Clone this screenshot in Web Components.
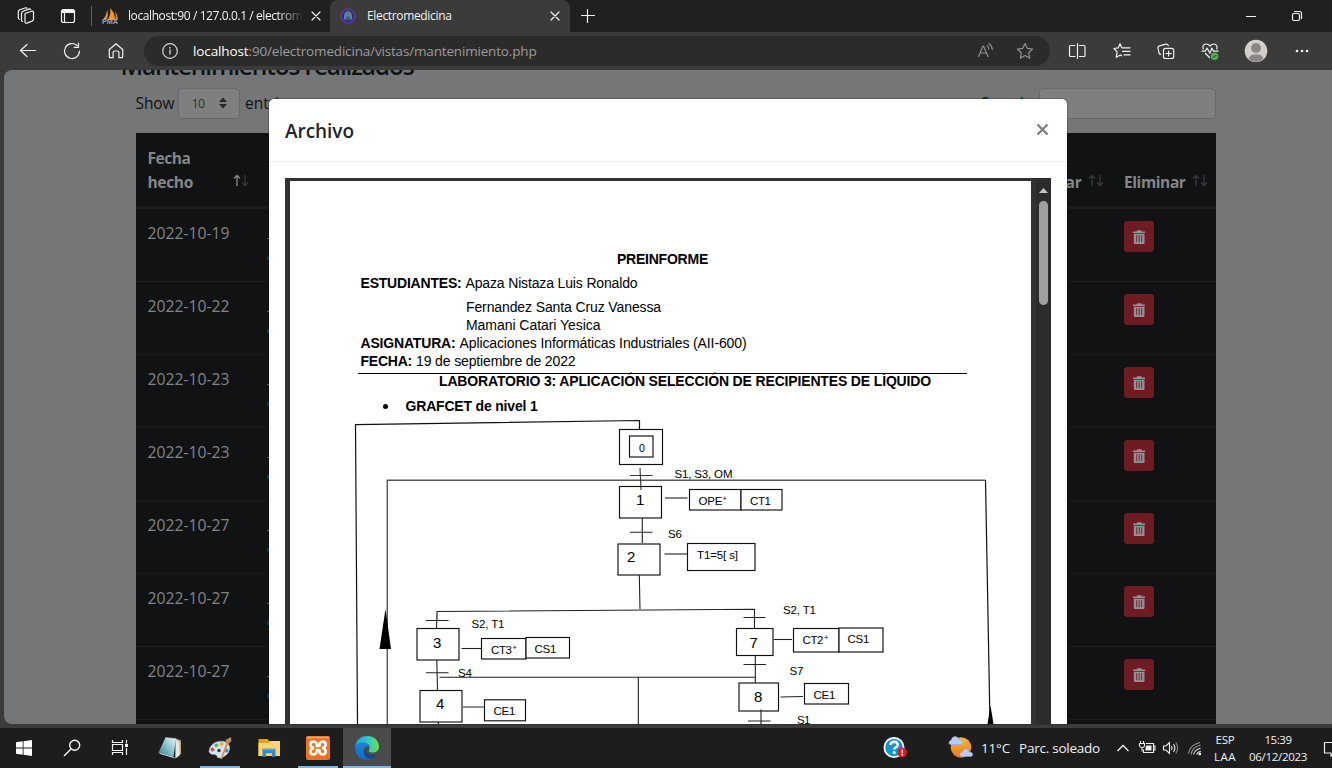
<!DOCTYPE html>
<html lang="es">
<head>
<meta charset="utf-8">
<title>Electromedicina</title>
<style>
html,body{margin:0;height:100%;overflow:hidden;background:#202020;font-family:"Open Sans","Noto Sans",sans-serif}
</style>
</head>
<body>
<browser-window></browser-window>
<script>
const define = (name, html, setup) => {
  const t = document.createElement('template');
  t.innerHTML = html;
  customElements.define(name, class extends HTMLElement {
    connectedCallback() {
      if (this.shadowRoot) return;
      this.attachShadow({mode: 'open'}).append(t.content.cloneNode(true));
      if (setup) setup(this, this.shadowRoot);
    }
  });
};

/* Text run spaced to a given width */
define('fit-text', `<style>:host{display:inline-block;white-space:pre;flex:none}span{display:inline-block}</style><span><slot></slot></span>`, (el, root) => {
  const w = +el.getAttribute('w'), s = root.querySelector('span');
  const n = el.textContent.length;
  if (!n) return;
  el.style.letterSpacing = (w - s.getBoundingClientRect().width) / n + 'px';
  el.style.width = w + 'px';
});

/* Icons on a 32 x 32 grid, centred on 16,16 */
const L = 'fill="none" stroke="currentColor" stroke-width="1.2" stroke-linecap="round" stroke-linejoin="round"';
const icons = {
  workspaces: `<g ${L}><path d="M15 13.500l6.500-2.300q2-.5 2 1.400v6.400q0 1.500-1.400 2.100l-5.200 2q-1.900.6-1.900-1.300z"/><path d="M12.600 21.500q-1.100-.3-1.100-1.600v-6.400q0-1.700 1.500-2.300l6.500-2.300 1.200.4M9.300 19.300q-1-.4-1-1.600v-5.600q0-1.700 1.500-2.300l6-2.100 1.300.4"/></g>`,
  tabs: `<g ${L}><rect x="9.500" y="9.500" width="13" height="13" rx="2"/><path d="M12.500 13v9"/></g><path d="M9.500 13v-2q0-1.500 1.500-1.500h10q1.500 0 1.500 1.500v2z" fill="currentColor"/>`,
  pma: `<path d="M13 10q2 5-1 10H8.500q4-4 4.500-10M16 8q5 5 5 12h-7.500q4-6 2.500-12" fill="#f29a27"/><path d="M21 11q3 4 3 9h-2.500q.5-5-.5-9z" fill="#d8862a"/><text x="8" y="23.800" font-size="6.500" font-weight="700" font-family="Liberation Sans" fill="#9a9dcc" textLength="16" lengthAdjust="spacingAndGlyphs">PMA</text>`,
  seal: `<circle cx="16" cy="16" r="6.500" fill="#2b3448" stroke="#43359f" stroke-width="2.200"/><circle cx="16" cy="16" r="7.900" fill="none" stroke="#a02b4f" stroke-width=".9" stroke-dasharray="1.500 1"/><path d="M12 19.500q-1-7.500 4-8.500 5 1 4 8.500z" fill="#4e88a7"/><path d="M15 13h2v3h-2z" fill="#b9545d"/><path d="M14 16.500h4v3h-4z" fill="#365f8a"/>`,
  close: `<path ${L} d="M12 12l8 8m0-8l-8 8"/>`,
  plus: `<path ${L} d="M9.500 15.500h13M15.500 9.500v13"/>`,
  minimize: `<path d="M11 16h10v1H11z" fill="currentColor"/>`,
  restore: `<g ${L}><rect x="11.500" y="13.500" width="7" height="7" rx="1.500"/><path d="M13.500 11.500h5q2 0 2 2v5"/></g>`,
  back: `<path ${L} d="M23.500 15.500H8.500M15 9.500L8.500 15.500l6.500 6"/>`,
  reload: `<path ${L} stroke-width="1.300" d="M23.500 16a7.500 7.500 0 1 1-2.400-5.500M22.500 8v4.300h-4.300"/>`,
  home: `<path ${L} d="M9.300 14.500L16 8.700l6.700 5.800v7.300q0 .9-.9.9h-2.900v-5.200q0-1.500-1.500-1.500h-2.800q-1.500 0-1.500 1.500v5.200h-2.900q-.9 0-.9-.9z"/>`,
  info: `<circle cx="16" cy="16" r="7.300" ${L}/><path d="M15.300 14.500h1.400v5h-1.400zM15.300 12h1.400v1.400h-1.400z" fill="currentColor"/>`,
  read: `<g ${L}><path d="M9.500 21.500L14 11h.5L19 21.500M11 18h6.500M18 10.500q1.700 1.300 1.700 3.500M20 8.500q3 2 3.300 6"/></g>`,
  star: `<path ${L} d="M16 8.500l2.300 4.900 5.300.7-3.900 3.700 1 5.300L16 20.500l-4.700 2.600 1-5.300-3.900-3.700 5.300-.7z"/>`,
  split: `<path ${L} d="M14 10.500h-4.500q-1 0-1 1v9q0 1 1 1H14M18.500 10.500h4.500q1 0 1 1v9q0 1-1 1h-4.500M16.500 8.500v15"/>`,
  favorites: `<path ${L} d="M18.500 12.800h-1.700L15 8.700l-1.900 4.200-4.200.6 3.200 3.300-.9 5.500 4.200-2.400 1.200.9M18.500 12.800h6.500M17.500 16.300H25M19 19.800h6"/>`,
  collections: `<g ${L} stroke-width="1.300"><rect x="13.500" y="13.300" width="10.200" height="10.200" rx="2"/><path d="M18.600 16v5M16 18.500h5.200M10.800 19.500q-1.500-.3-1.900-2l-.9-4.300q-.3-2 1.500-2.400l6.300-1.700q2-.4 2.500 1.500"/></g>`,
  health: `<g ${L} stroke-width="1.300"><path d="M9.200 14q-1.200-4.500 3-5 2.200-.1 3.800 2.200Q17.600 8.900 19.800 9q4.200.5 3 5M8 16.200h3.200l2-3 2.700 5 2-5.200 1.600 3.200h4.500M11.500 18.500l4 4"/></g><circle cx="20.500" cy="21.300" r="3.800" fill="#4caf50"/><path d="M18.900 21.500l1 1 2.300-2.400" fill="none" stroke="#203d20"/>`,
  avatar: `<circle cx="16" cy="16" r="11.300" fill="#d3d0cc"/><circle cx="16" cy="13" r="5" fill="#8c8784"/><path d="M8.500 23.500q1.500-4.300 7.500-4.300t7.500 4.300q-3 3.500-7.500 3.500t-7.500-3.500z" fill="#8c8784"/>`,
  dots: `<g fill="currentColor"><circle cx="11" cy="16" r="1.300"/><circle cx="16" cy="16" r="1.300"/><circle cx="21" cy="16" r="1.300"/></g>`,
  windows: `<path d="M8 10.300l6.700-1v6.200H8zM15.500 9.200L24 8v7.500h-8.500zM8 16.400h6.700v6.300L8 21.700zM15.500 16.400H24V24l-8.500-1.200z" fill="#fff"/>`,
  search: `<g fill="none" stroke="#f4f4f4" stroke-width="1.400"><circle cx="18.700" cy="13.300" r="5"/><path d="M15 17l-7 7"/></g>`,
  taskview: `<g fill="none" stroke="#f4f4f4" stroke-width="1.200"><path d="M8.500 8v2.500h10V8M8.500 23v-2.500h10V23M8.500 12.500h10v6h-10zM22.500 8v3.500M22.500 16V23"/></g><path d="M21 12h3v3h-3z" fill="#fff"/>`,
  notepad: `<linearGradient id="n" x1="1" y1="0" x2="0" y2="1"><stop stop-color="#e9fafa"/><stop offset=".5" stop-color="#86bfca"/><stop offset="1" stop-color="#2a8093"/></linearGradient><path d="M21 6.500l5 2v13l-4 4.500z" fill="#c3a673"/><path d="M20.500 7l3.800 3 .5 13-4.500 3.500z" fill="#dfe8ee"/><path d="M10.500 5.500L21 6.500l-2.500 18.500-15-4.500z" fill="url(#n)"/><path d="M3.500 20.500l15 4.500 1.800 1.500-15-4.500z" fill="#dce8ea"/><path d="M10.500 5.500l10.500 1" stroke="#9eabae" stroke-dasharray="1 1"/>`,
  paint: `<path d="M5 19.500C5.500 12 13 8 20 9.500q6.500 2 5.500 8-1 5-5.500 7-3 2.500-6.500 1-.5-3-3-3-4.500.5-5.500-3z" fill="#d5e6f3" stroke="#91b5d1" stroke-width=".6"/><circle cx="8.500" cy="17.500" r="1.900" fill="#e14a45"/><circle cx="12.300" cy="13.300" r="1.900" fill="#59b651"/><circle cx="17.500" cy="12" r="2" fill="#efaf32"/><circle cx="22.500" cy="18.500" r="2" fill="#4792dc"/><circle cx="15" cy="18.500" r="1.700" fill="#253445"/><path d="M22 11.500l2 1L18 27l-1.500.5.500-2z" fill="#e39335"/><path d="M22 11.500l-.5-3.500 5.500-3 .5 4-3.500 3.500z" fill="#b98c5f"/>`,
  explorer: `<path d="M5.500 7h9l1.500 2H27v15H5.500z" fill="#e2a322"/><path d="M5.500 11h10l2-2H27v15H5.500z" fill="#fbd667"/><path d="M9.500 17h13v7.800h-3.600v-3.500h-5.800v3.500H9.500z" fill="#3b89cf"/><path d="M9.500 16.500h13v1.500h-13z" fill="#5ba6e4"/>`,
  xampp: `<rect x="4" y="4" width="24" height="24" rx="2" fill="#ef7122"/><path d="M5 5.500h22" stroke="#f7a772" stroke-width="1.500"/><path d="M14.500 13.800q.6-4.100-3-4.100-3.200 0-3.200 2.900 0 1.900 2.700 3.400-2.700 1.500-2.700 3.400 0 2.900 3.200 2.900 3.600 0 3-4.100h3q-.6 4.100 3 4.100 3.200 0 3.200-2.900 0-1.900-2.700-3.400 2.700-1.500 2.700-3.400 0-2.900-3.200-2.900-3.600 0-3 4.100z" fill="none" stroke="#fff" stroke-width="2.700" stroke-linejoin="round"/>`,
  edge: `<linearGradient id="a" x1="0" x2="1"><stop stop-color="#219cdb"/><stop offset=".5" stop-color="#31c6d2"/><stop offset="1" stop-color="#63e345"/></linearGradient><linearGradient id="b" x1="0" y1="0" x2="0" y2="1"><stop stop-color="#1986d8"/><stop offset="1" stop-color="#0b6dc8"/></linearGradient><path d="M4 15.500C4.500 8.500 9.500 4 16 4c7 0 12 4.700 12 10.500 0 4-3 6-6.500 6-3.200 0-4.500-1.300-3.200-3 1.500-4.500-2-6.500-5.500-6.500-4 0-7.800 2-8.800 4.500z" fill="url(#a)"/><path d="M4 15.500C5 12 8.500 10.500 12 10.500c3.500 0 6 2 6.500 5-2-2-6-1-6 3.500 0 4.500 3 7.500 7 8.300C12 30 4 24 4 15.500z" fill="url(#b)"/><path d="M13.500 17c-2 4 .5 9.500 6 10.300 3-1 5-2.700 6.500-5-5.500 2-11.500.5-12.500-5.300z" fill="#114a8b"/>`,
  help: `<circle cx="15" cy="15.500" r="9.600" fill="#1393ce" stroke="#fff" stroke-width="1.800"/><path d="M11.500 13q.2-3.300 3.700-3.300 3.600.2 3.500 3 0 1.700-2 2.700-1.400.7-1.400 2.200" fill="none" stroke="#fff" stroke-width="2.400"/><circle cx="15.200" cy="20.600" r="1.500" fill="#fff"/><circle cx="23.200" cy="20.500" r="4.800" fill="#e51622"/><path d="M22.500 17.500h1.500v3.700h-1.500zM22.500 22h1.500v1.500h-1.500z" fill="#fff"/>`,
  weather: `<linearGradient id="s" x1="0" y1="0" x2="0" y2="1"><stop stop-color="#fbb739"/><stop offset="1" stop-color="#ec7621"/></linearGradient><circle cx="17" cy="15.500" r="10.300" fill="url(#s)"/><path d="M6 12.500q-1-.3-1-2 .2-2 2.200-2.200.8-3.800 4-3.700 3 .2 3.500 3.200 4-.2 4.300 2.700 0 1.900-2 2zM17.500 24.500q-1.800-.4-1.700-2 .2-2.200 2.600-2.300 1-3.200 3.700-3.100 2.700.2 3.200 2.900 3.500.1 3.400 2.700-.2 1.800-2 1.800z" fill="#b9cdf3" stroke="#8ea8dd" stroke-width=".5"/>`,
  up: `<path d="M10.500 19l5.500-5.500 5.500 5.500" fill="none" stroke="#eee" stroke-width="1.300"/>`,
  battery: `<g fill="none" stroke="#eee" stroke-width="1.100"><path d="M15 11.500h7.500v9H12.500v-3M22.500 14h1.500v4h-1.500M9.500 9v2M12.500 9v2M8.500 11.500h5v2.300q-.5 1.700-2.500 1.700t-2.500-1.700zM11 15.500v4"/></g><path d="M15.500 13.500h5v5H14.500v-3z" fill="#eee"/>`,
  sound: `<g fill="none" stroke="#eee" stroke-width="1.100"><path d="M8.500 14h2.500l3.500-3.500v11L11 18H8.500zM16.500 14q1.300 2 0 4M18.500 12q2.800 4 0 8"/><path d="M20.700 10.200q3.800 5.800 0 11.600" stroke="#888"/></g>`,
  wifi: `<g fill="none" stroke="#ddd" stroke-width="1.100"><path d="M12.500 22.500q1-4.800 7-6.300M15.500 22.500q1-2.500 4.500-3.500"/><path d="M10 22.500q1-7.300 9.500-9.500M7.500 21.500Q8.500 13 19 10.500" stroke="#999"/></g><circle cx="18.800" cy="22" r="1.400" fill="#eee"/>`,
  notice: `<path d="M9.500 10.500h15v10.500h-5l-3.500 3v-3H9.500z" fill="none" stroke="#eee" stroke-width="1.200"/>`,
  trash: `<g fill="#909295"><path d="M10 11.500h3.500l.8-1.300h4l.8 1.300H22v1.400H10zM10.800 13.700h10.700V23q0 1-1 1h-8.700q-1 0-1-1z"/></g><path d="M13.700 15.200v7M16.200 15.200v7M18.700 15.200v7" stroke="#742a35"/>`
};
define('ui-icon', `<style>:host{display:block;flex:none;width:32px;height:32px}svg{display:block;overflow:visible}</style><svg width="32" height="32" viewBox="0 0 32 32"></svg>`, (el, r) => {
  r.querySelector('svg').innerHTML = icons[el.getAttribute('name')];
});

define('tab-strip', `<style>
:host{display:flex;height:32px;background:#202020;color:#f2f2f2;font-size:12px;line-height:32px}
.lead{display:flex;width:91px;padding-left:10px;box-sizing:border-box;gap:10px}
.sep{width:1px;height:20px;margin-top:6px;background:#5c5c5c}
.tab{display:flex;box-sizing:border-box;flex:none}
.one{width:238px;padding-left:2px}
.one .label{-webkit-mask-image:linear-gradient(90deg,#000 150px,transparent 176px);width:176px;margin-left:2px}
.two{width:240px;background:#3b3b3b;border-radius:8px 8px 0 0;padding-left:2px}
.two fit-text{margin-left:3px}.two .x{margin-left:87px}
.one .x{margin-left:-3px}
.space{flex:1}
.win{display:flex;gap:14px;padding-right:19px}
.add{margin-left:2px}
</style>
<div class="lead"><ui-icon name="workspaces"></ui-icon><ui-icon name="tabs"></ui-icon></div><div class="sep"></div>
<div class="tab one"><ui-icon name="pma"></ui-icon><div class="label"><fit-text w="174.500">localhost:90 / 127.0.0.1 / electrom</fit-text></div><ui-icon class="x" name="close"></ui-icon></div>
<div class="tab two"><ui-icon name="seal"></ui-icon><fit-text w="84.500">Electromedicina</fit-text><ui-icon class="x" name="close"></ui-icon></div>
<ui-icon class="add" name="plus"></ui-icon><div class="space"></div>
<div class="win"><ui-icon name="minimize"></ui-icon><ui-icon name="restore"></ui-icon></div>`);

define('address-bar', `<style>
:host{display:flex;height:38px;background:#3b3b3b;color:#f0f0f0;align-items:center}
.nav{display:flex;gap:12px;padding-left:12px;width:144px;box-sizing:border-box}
.url{display:flex;align-items:center;width:906px;height:30px;border-radius:15px;background:#2b2b2b;box-sizing:border-box;padding-left:10px;font-size:13.500px}
.url .i{color:#d5d5d5}
.path{color:#9b9b9b}.host{margin-left:7px;color:#fff}.sp{flex:1}.dim{color:#8d8d8d}.r{margin-left:8px;margin-right:9px}
.tools{display:flex;gap:12.300px;padding-left:11px}.av{margin-left:2px}.dots{margin-left:2px}
</style>
<div class="nav"><ui-icon name="back"></ui-icon><ui-icon name="reload"></ui-icon><ui-icon name="home"></ui-icon></div>
<div class="url"><ui-icon class="i" name="info"></ui-icon><fit-text class="host" w="55.500">localhost</fit-text><fit-text class="path" w="288">:90/electromedicina/vistas/mantenimiento.php</fit-text><span class="sp"></span><ui-icon class="dim" name="read"></ui-icon><ui-icon class="dim r" name="star"></ui-icon></div>
<div class="tools"><ui-icon name="split"></ui-icon><ui-icon name="favorites"></ui-icon><ui-icon name="collections"></ui-icon><ui-icon name="health"></ui-icon><ui-icon class="av" name="avatar"></ui-icon><ui-icon class="dots" name="dots"></ui-icon></div>`);

define('sort-arrows', `<style>:host{display:block;width:16px;height:14px;flex:none}svg{display:block}</style>
<svg width="16" height="14" fill="none"><path class="u" stroke="#37393c" stroke-width="1.300" d="M4 12V1.500M1 4.500l3-3 3 3"/><path stroke="#37393c" stroke-width="1.300" d="M12 1v10.500M9 8.500l3 3 3-3"/></svg>`, (el, r) => {
  if (el.hasAttribute('up')) r.querySelector('.u').setAttribute('stroke', '#8b8c8d');
});

define('record-row', `<style>
:host{display:grid;grid-template-columns:120px 1fr 92px;height:73px;box-sizing:border-box;border-top:1px solid #1b1d1f;padding-top:12px;color:#838485;font-size:15.700px;line-height:24px}
:host([first]){height:72px;border-top:0}
fit-text{margin-left:11.500px}
.mid{display:flex;flex-direction:column;padding-left:11px}
.mid i{width:2px;height:1px;margin-top:17px;background:#6f7072}.mid i+i{height:4px;margin-top:17px;background:#003c76}
.btn{width:30px;height:31px;border-radius:3px;background:#6e1b24;overflow:hidden;display:flex;justify-content:center}
.btn ui-icon{margin:-1px 0 0}
</style><fit-text w="82"></fit-text><div class="mid"><i></i><i></i></div><div class="btn"><ui-icon name="trash"></ui-icon></div>`, (el, r) => {
  const old = r.querySelector('fit-text'), t = document.createElement('fit-text');
  t.setAttribute('w', '82'); t.textContent = el.getAttribute('date'); old.replaceWith(t);
});

define('records-page', `<style>
:host{display:block;height:654px;overflow:hidden;background:#757678;color:#101214;font-size:15.500px}
h2{margin:-20px 0 0 116.500px;font-size:24.500px;font-weight:600;line-height:32px;height:32px}
.ctl{display:flex;height:30px;margin:6px 116px 15px 131.500px;align-items:center}
.sel{display:flex;align-items:center;justify-content:space-between;width:61.500px;height:31px;box-sizing:border-box;border:1px solid #67696c;border-radius:4px;background:#7f7f7f;margin:0 5.500px 0 3.500px;padding:0 11px 0 12.500px;font-size:12.500px;color:#303234}
.in{width:177px;height:31px;box-sizing:border-box;border:1px solid #67696c;border-radius:4px;background:#7f7f7f;margin-left:6px}
.sp{flex:1}
.ctl>fit-text{margin-top:-1px}
.table{width:1080px;margin-left:132px;background:#101214}
.head{display:grid;grid-template-columns:120px 1fr 92px;height:76px;box-sizing:border-box;border-bottom:3px solid #1b1d1f;padding:12px 0 0 0;font-weight:700;line-height:24px;color:#858687}
.c1{display:flex;align-items:flex-end;padding-left:11.500px;gap:39.500px;height:50px}.c1 sort-arrows{margin:0 0 7px}
.c1 div{height:49px}.c1 fit-text{display:block}
.c2{display:flex;justify-content:flex-end;padding:25px 20px 0 0;gap:6px}.c3{display:flex;padding-top:25px;gap:6px}
.c2,.c3{height:24px}.c2 sort-arrows,.c3 sort-arrows{margin-top:4px}
</style>
<h2><fit-text w="293">Mantenimientos realizados</fit-text></h2>
<div class="ctl"><fit-text w="39">Show</fit-text><div class="sel"><fit-text w="13">10</fit-text><svg width="10" height="12" fill="#26282a"><path d="M1 5l4-4.500L9 5zM1 7h8l-4 4.500z"/></svg></div><fit-text w="50">entries</fit-text><span class="sp"></span><fit-text w="52">Search:</fit-text><div class="in"></div></div>
<div class="table"><div class="head"><div class="c1"><div><fit-text w="43">Fecha</fit-text><fit-text w="45.500">hecho</fit-text></div><sort-arrows up></sort-arrows></div><div class="c2"><fit-text w="47">Editar</fit-text><sort-arrows></sort-arrows></div><div class="c3"><fit-text w="61.500">Eliminar</fit-text><sort-arrows></sort-arrows></div></div>
<record-row first date="2022-10-19"></record-row><record-row date="2022-10-22"></record-row><record-row date="2022-10-23"></record-row><record-row date="2022-10-23"></record-row><record-row date="2022-10-27"></record-row><record-row date="2022-10-27"></record-row><record-row date="2022-10-27"></record-row><record-row date=""></record-row></div>`);

/* GRAFCET diagram */
const B = (x, y, w, h, c = '#111') => `<rect x="${x + .5}" y="${y + .5}" width="${w}" height="${h}" fill="#fff" stroke="${c}" stroke-width="1.150"/>`;
const P = (d, c = '#222', k = 1.1) => `<path d="${d}" fill="none" stroke="${c}" stroke-width="${k}"/>`;
const T = (x, y, s, w, f = 11.5) => `<text x="${x}" y="${y}" font-size="${f}" textLength="${w}">${s}</text>`;
const S = (x, y) => `<text x="${x}" y="${y}" font-size="7.500">+</text>`;
const grafcet = [
  P('M639.5 430v-9.500L355.500 424.700L357.500 724', '#111', 1.2), P('M387.300 724V480.200H985.500', '#555', 1.4), P('M985.500 480L990 724', '#111', 1.2),
  B(619,429,43,35), B(629,435.5,23.500,21), T(639,451.500,'0',6,10.500),
  B(619,486,42,31.500), P('M630 475.500h22.500M640 468L641 490','#333'), T(674.5,478,'S1, S3, OM',58), T(636,505,'1',8,15),
  P('M665 498h22.500'), B(689,489,51.500,20.500), B(740.5,489,41,20.500), T(698.5,505,'OPE',24), S(722.500,501), T(750,505,'CT1',21),
  P('M642.3 518v25M630 532.200h22.500'), T(668,538,'S6',14),
  B(617.5,543.5,42,31), T(627,562,'2',9,15), P('M664.5 554h22.500'), B(687,543,67.5,27), T(697,559,'T1=5[ s]',41),
  P('M639.3 575L640 609'), P('M437 620v-8.500L754.500 609.200V629M437 611.500L436.500 629M426 620.500h22.500M743.500 617.500H765.500'),
  T(471.5,628,'S2, T1',33), T(783,614,'S2, T1',33),
  B(416.5,628,42,31.500), T(433,648,'3',9,15), P('M461.5 648.500H482'), B(481,638,44.5,20.500), B(525.5,637,43.5,20.500), T(491,654,'CT3',21), S(512.500,650), T(534.500,653,'CS1',22),
  P('M436.8 660L437.500 690M426 672.800h22.500'), T(458,676.500,'S4',14), P('M439.500 677.300H755.500M638.300 677.300V724'),
  B(419.5,690,42,31.5), T(436,709,'4',9,15), P('M463 707h21M438.300 722v2'), B(484,699.3,41,21), T(493.500,715,'CE1',22),
  B(736,628,36.5,27), T(749.500,648,'7',9,15), P('M774 639.500h18'), B(793,628,45.5,23.500), B(838.5,627.5,44,24), T(802.500,644,'CT2',21), S(824,640), T(847.500,643,'CS1',22),
  P('M755.3 656v27M743.500 664.500h22.500'), T(789.500,675,'S7',14),
  B(738.5,682.5,39.5,28), T(754,702,'8',9,15), P('M780.500 697l22.500-.5'), B(804,683,44,20.500), T(813.500,699,'CE1',22),
  P('M761 709.500V724M748 721h22.500'), T(797,724,'S1',13.500),
  '<path d="M385.500 609L391 649H379.500z"/><path d="M990.500 705.500L993.500 724H987.500z"/>'
].join('');
define('grafcet-diagram', `<style>:host{display:block}svg{display:block;font-family:"Liberation Sans",Arial,sans-serif}</style><svg width="741" height="309" viewBox="290 415 741 309">${grafcet}</svg>`);

define('pdf-page', `<style>
:host{display:block;width:741px;height:543px;background:#fff;color:#000;overflow:hidden;font:14px/18px "Liberation Sans",Arial,sans-serif}
.body{height:234px;padding:69px 0 0 70.500px;box-sizing:border-box;display:flex;flex-direction:column}
.l{display:flex;gap:4px;height:18px;flex:none}
.c{margin-left:256.500px}.n{margin-left:105.500px}
.rule{height:1px;width:609px;background:#000;margin:3px 0 -2px -2.500px;flex:none}
.dot{width:5px;height:5px;border-radius:50%;background:#000;margin:7px 13.500px 0 22.500px}
</style>
<div class="body"><b class="l c"><fit-text w="91">PREINFORME</fit-text></b>
<div class="l" style="margin-top:6px"><b><fit-text w="101">ESTUDIANTES:</fit-text></b><fit-text w="172">Apaza Nistaza Luis Ronaldo</fit-text></div>
<div class="l n" style="margin-top:6px"><fit-text w="195">Fernandez Santa Cruz Vanessa</fit-text></div>
<div class="l n"><fit-text w="134.500">Mamani Catari Yesica</fit-text></div>
<div class="l"><b><fit-text w="95">ASIGNATURA:</fit-text></b><fit-text w="287">Aplicaciones Informáticas Industriales (AII-600)</fit-text></div>
<div class="l"><b><fit-text w="51.500">FECHA:</fit-text></b><fit-text w="159.500">19 de septiembre de 2022</fit-text></div>
<div class="rule"></div>
<b class="l" style="margin-left:78.500px"><fit-text w="492">LABORATORIO 3: APLICACIÓN SELECCIÓN DE RECIPIENTES DE LÍQUIDO</fit-text></b>
<b class="l" style="margin-top:7px"><span class="dot"></span><fit-text w="132">GRAFCET de nivel 1</fit-text></b></div>
<grafcet-diagram></grafcet-diagram>`);

define('file-modal', `<style>
:host{display:block;width:798px;height:626px;background:#fff;background-clip:padding-box;border-radius:5px 5px 0 0}
header{height:63px;box-sizing:border-box;border-bottom:1px solid #e9ecef;padding:1px 16px 0;display:flex;justify-content:space-between;align-items:center;color:#212529;font-size:19px;font-weight:600}
header svg{margin:-2px 2.500px 0 0}
.pdf{display:flex;margin:16px 16px 0;height:546px;box-sizing:border-box;padding:3px 0 0 5px;background:#323234}
.bar{width:15px;height:546px;margin:-3px 0 0 5px;background:#2c2c2c;display:flex;flex-direction:column;align-items:center}
.bar svg{margin-top:10px;flex:none}.thumb{width:9px;height:104px;border-radius:5px;background:#9f9f9f;margin-top:8px;flex:none}
</style><header><fit-text w="69">Archivo</fit-text><svg width="13" height="13" stroke="#7f7f7f" stroke-width="2.400"><path d="M1.500 1.500l10 10m0-10l-10 10"/></svg></header>
<div class="pdf"><pdf-page></pdf-page><div class="bar"><svg width="9" height="5" fill="#c4c4c4"><path d="M0 5L4.500 0 9 5z"/></svg><div class="thumb"></div></div></div>`);

define('task-bar', `<style>
:host{display:flex;height:40px;background:#1d1d1d;color:#f0f0f0;align-items:center;overflow:hidden}
.cell{width:48px;height:40px;display:grid;place-items:center;flex:none;box-sizing:border-box}
.apps{display:flex;gap:1px;margin-left:3px}
.run{background:linear-gradient(#76b9ed,#76b9ed) 50% 100%/40px 2px no-repeat}
.on{background:linear-gradient(#76b9ed,#76b9ed) 50% 100%/48px 2px no-repeat #4b4b4b}
.help{margin-left:488px}.wx{margin-left:33px}
.t{font-size:13.500px;margin:0 0 0 5px;display:flex;gap:9px}
.tray{display:flex;margin-left:7px}.tray ui-icon{width:24px}
.st{display:flex;flex-direction:column;align-items:center;font-size:11.500px;line-height:17px;flex:none;margin-top:-1px}
</style>
<div class="cell"><ui-icon name="windows"></ui-icon></div><div class="cell"><ui-icon name="search"></ui-icon></div><div class="cell"><ui-icon name="taskview"></ui-icon></div>
<div class="apps"><div class="cell"><ui-icon name="notepad"></ui-icon></div><div class="cell run"><ui-icon name="paint"></ui-icon></div><div class="cell"><ui-icon name="explorer"></ui-icon></div><div class="cell run"><ui-icon name="xampp"></ui-icon></div><div class="cell on"><ui-icon name="edge"></ui-icon></div></div>
<ui-icon class="help" name="help"></ui-icon><ui-icon class="wx" name="weather"></ui-icon>
<div class="t"><fit-text w="29">11°C</fit-text><fit-text w="81">Parc. soleado</fit-text></div>
<div class="tray"><ui-icon name="up"></ui-icon><ui-icon name="battery"></ui-icon><ui-icon name="sound" style="width:26px"></ui-icon><ui-icon name="wifi" style="width:28px"></ui-icon></div>
<div class="st" style="margin-left:5px"><fit-text w="19">ESP</fit-text><fit-text w="22">LAA</fit-text></div>
<div class="st" style="margin-left:13px"><fit-text w="27">15:39</fit-text><fit-text w="58">06/12/2023</fit-text></div>
<ui-icon name="notice" style="margin-left:8px"></ui-icon>`);

define('browser-window', `<style>
:host{display:flex;flex-direction:column;width:1332px;height:768px;overflow:hidden}
.view{position:relative;height:658px;background:#3b3b3b;padding-left:4px;box-sizing:border-box;flex:none}
records-page{border-radius:8px 0 0 8px}
file-modal{position:absolute;left:269px;top:29px;height:625px;overflow:hidden;box-shadow:0 0 0 1px rgba(0,0,0,.2)}
</style><tab-strip></tab-strip><address-bar></address-bar><div class="view"><records-page></records-page><file-modal></file-modal></div><task-bar></task-bar>`);
</script>
</body>
</html>
